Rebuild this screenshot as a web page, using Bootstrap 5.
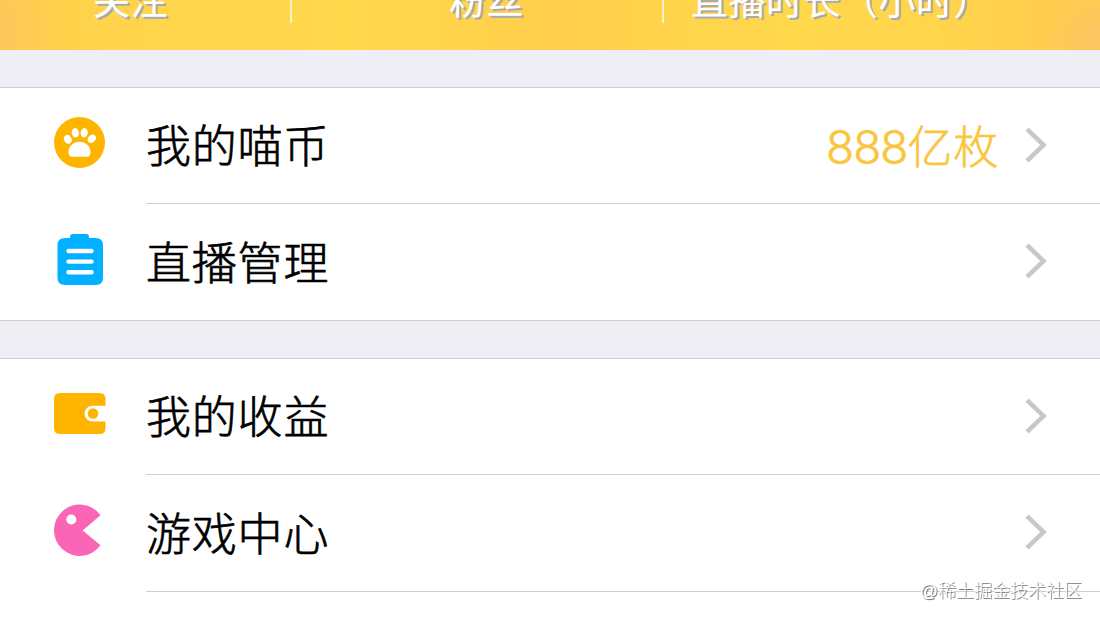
<!DOCTYPE html>
<html lang="zh-CN">
<head>
<meta charset="utf-8">
<meta name="viewport" content="width=device-width, initial-scale=1">
<title>个人中心</title>
<link href="https://cdn.jsdelivr.net/npm/bootstrap@5.3.0/dist/css/bootstrap.min.css" rel="stylesheet">
<style>
body{font-family:"Liberation Sans","Noto Sans CJK SC",sans-serif;color:#000;background:#fff;height:619px;overflow:hidden}
.stats{height:49.5px;overflow:hidden;color:#fff;font-size:37px;font-weight:400;line-height:50px;letter-spacing:.5px;text-shadow:2px 2px 0 #a9a9ae;
background:radial-gradient(ellipse 60px 80px at 0 30px,#ffc65c,#ffc65c00),radial-gradient(ellipse 60px 50px at 100% 40px,#ffc564,#ffc56400),linear-gradient(90deg,#ffce4b 0,#ffd54b 14%,#ffd84c 32%,#ffd54b 39%,#ffce4c 51%,#ffd54b 63%,#ffd84c 72%,#ffd54b 85%,#ffcb4d 97%)}
.stat{height:50px;margin-top:-22px;white-space:nowrap}
.rule{width:2px;height:23px;background:#fff;opacity:.65}
.gap-band{height:38.5px;background:#efeef4;border-bottom:1px solid #ceced2}
.gap-mid{height:39px;border-top:1px solid #ceced2}
.entry{height:116px;padding-left:54px}
.entry .ico{width:52px;height:52px;margin:29px 40px 0 0}
.body-cell{font-size:45px;letter-spacing:.8px;font-weight:300;-webkit-text-stroke:.7px currentColor}
.split{border-bottom:1px solid #cfcfd1}
.entry.tall{height:117px}
.label-text,.coins{line-height:66px;padding-top:5px}
.coins{color:#f9c63f;margin-right:26px;-webkit-text-stroke-width:.6px}
.coins b{font-family:Inter,sans-serif;font-weight:300;letter-spacing:-1px;font-size:46px}
.arrow{width:22px;height:36px;margin:-2px 53px 0 0}
.watermark{right:18px;top:579px;font-size:18px;line-height:24px;font-weight:300;color:#fff;text-shadow:1px 1px 0 #777}
</style>
</head>
<body>
<header class="stats d-flex">
<div class="stat" style="width:290px;padding-left:93px">关注</div><div class="rule"></div>
<div class="stat" style="width:370px;padding-left:157px">粉丝</div><div class="rule"></div>
<div class="stat" style="padding-left:27px">直播时长（小时）</div>
</header>
<div class="gap-band"></div>
<main>
<div class="entry d-flex">
<svg class="ico flex-shrink-0" viewBox="0 0 52 52"><circle cx="25.5" cy="25.500" r="25.5" fill="#ffb400"/><g fill="#fff"><ellipse cx="13.8" cy="22.3" rx="3.7" ry="4.5" transform="rotate(-30 13.8 22.3)"/><ellipse cx="21.3" cy="15.8" rx="3.6" ry="4.7" transform="rotate(-8 21.3 15.8)"/><ellipse cx="30.2" cy="15.8" rx="3.6" ry="4.7" transform="rotate(8 30.2 15.8)"/><ellipse cx="37.8" cy="21.8" rx="3.6" ry="4.5" transform="rotate(45 37.8 21.8)"/><path d="M18 39.800c-2.500 0-3.500-2-3.500-4.500 0-6 5-10.500 11-10.500S36.500 29.300 36.500 35.300c0 2.500-1 4.500-3.500 4.500z"/></g></svg>
<div class="body-cell split flex-grow-1 d-flex align-items-center"><span class="label-text flex-grow-1">我的喵币</span><span class="coins"><b>888</b>亿枚</span><svg class="arrow" viewBox="0 0 22 36"><path d="M2 2.2 18.6 18 2 33.8" fill="none" stroke="#c7c7cc" stroke-width="4.5"/></svg></div>
</div>
<div class="entry d-flex">
<svg class="ico flex-shrink-0" viewBox="0 0 52 52"><path d="M16 5V4q0-3 3-3h10q3 0 3 0 3 0 3 3v1h6.500q7.500 0 7.500 7v33q0 7-7 7H11q-7.500 0-7.500-7V12q0-7 7.500-7z" fill="#00b1ff"/><path d="M14.500 18h23M14.500 28.600h23M14.500 39.200h23" stroke="#fff" stroke-width="4.400" stroke-linecap="round"/></svg>
<div class="body-cell flex-grow-1 d-flex align-items-center"><span class="label-text flex-grow-1">直播管理</span><svg class="arrow" viewBox="0 0 22 36"><path d="M2 2.200 18.600 18 2 33.800" fill="none" stroke="#c7c7cc" stroke-width="4.5"/></svg></div>
</div>
<div class="gap-band gap-mid"></div>
<div class="entry d-flex">
<svg class="ico flex-shrink-0" viewBox="0 0 52 52"><path d="M6 5h39.500q6 0 6 6v6.800H38.500a7.900 7.900 0 0 0 0 15.800h13V40q0 6-6 6H6q-6 0-6-6V11q0-6 6-6z" fill="#ffb400"/><circle cx="39" cy="25.500" r="5.300" fill="#ffb400"/></svg>
<div class="body-cell split flex-grow-1 d-flex align-items-center"><span class="label-text flex-grow-1">我的收益</span><svg class="arrow" viewBox="0 0 22 36"><path d="M2 2.200 18.600 18 2 33.800" fill="none" stroke="#c7c7cc" stroke-width="4.5"/></svg></div>
</div>
<div class="entry tall d-flex">
<svg class="ico flex-shrink-0" viewBox="0 0 52 52"><path d="M46.500 11.200A25.700 25.700 0 1 0 46.500 41.300L28.700 26.600z" fill="#fa65b5"/><circle cx="17.300" cy="15.500" r="5" fill="#fff"/></svg>
<div class="body-cell split flex-grow-1 d-flex align-items-center"><span class="label-text flex-grow-1">游戏中心</span><svg class="arrow" viewBox="0 0 22 36"><path d="M2 2.200 18.600 18 2 33.800" fill="none" stroke="#c7c7cc" stroke-width="4.5"/></svg></div>
</div>
</main>
<div class="watermark position-absolute">@稀土掘金技术社区</div>
<script src="https://cdn.jsdelivr.net/npm/bootstrap@5.3.0/dist/js/bootstrap.bundle.min.js"></script>
</body>
</html>
